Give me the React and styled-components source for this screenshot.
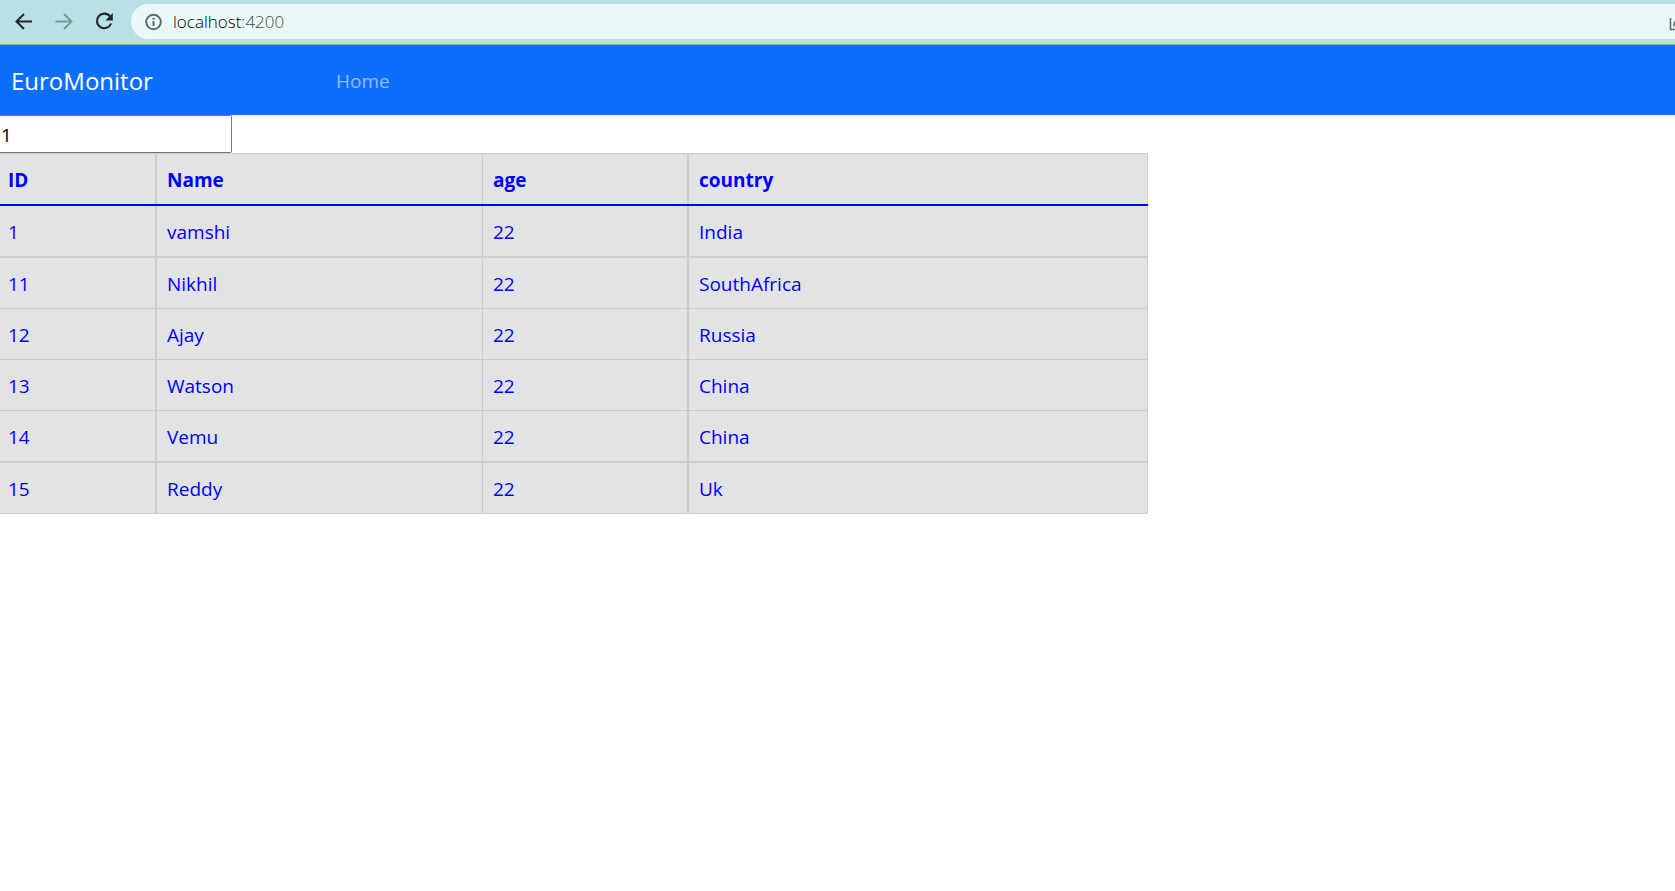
import React, { useState } from "react";
import styled, { createGlobalStyle } from "styled-components";

const GlobalStyle = createGlobalStyle`
  *, *::before, *::after { box-sizing: border-box; }
  body {
    margin: 0;
    background: #fff;
    color: #212529;
    font-family: "Segoe UI", "Open Sans", "Noto Sans", sans-serif;
    font-size: 19px;
    font-weight: 400;
    line-height: 30px;
  }
`;

const Page = styled.div`
  overflow-x: hidden;
`;

const BrowserBar = styled.header`
  display: flex;
  align-items: center;
  height: 45px;
  padding: 0 0 1px 12px;
  background: #b7e1e4;
  border-bottom: 1px solid #8fa9ad;
`;

const ToolButton = styled.button`
  display: flex;
  flex: none;
  width: 24px;
  height: 24px;
  margin-right: 16px;
  padding: 0;
  border: 0;
  background: none;
  color: ${(p) => (p.$muted ? "#7d999c" : "#202628")};
`;

const AddressBar = styled.div`
  display: flex;
  flex: 1;
  align-items: center;
  min-width: 0;
  height: 35px;
  padding-left: 12px;
  margin-left: -1px;
  overflow: hidden;
  background: #ebf8f8;
  border-radius: 18px 0 0 18px;
`;

const Address = styled.span`
  flex: 1;
  padding-left: 10px;
  color: #000;
  font-size: 17px;
  font-weight: 300;
  line-height: 24px;
`;

const Port = styled.span`
  color: #3f4a4c;
`;

const ShareButton = styled.button`
  display: flex;
  flex: none;
  width: 6px;
  padding: 0;
  border: 0;
  background: none;
  overflow: hidden;
  svg { flex: none; }
`;

const Navbar = styled.nav`
  display: flex;
  align-items: center;
  height: 70px;
  padding: 2px 0 0 11px;
  background: #0d6efd;
`;

const Brand = styled.a`
  width: 325px;
  color: #fff;
  font-size: 24px;
  text-decoration: none;
`;

const NavLink = styled.a`
  color: rgba(255, 255, 255, 0.55);
  text-decoration: none;
`;

const SearchInput = styled.input`
  display: block;
  width: 232px;
  height: 38px;
  padding: 3px 1px 1px;
  border: 1px solid #767676;
  border-left: 0;
  border-radius: 0 2px 2px 0;
  background: #fff;
  color: #000;
  font: inherit;
  outline: 0;
`;

const Table = styled.table`
  width: 100%;
  max-width: 1148px;
  table-layout: fixed;
  border-collapse: separate;
  border-spacing: 0;
  background: #e1e3e5;
  color: #00f;
  border-top: 1px solid #cbccce;
`;

const Column = styled.col`
  width: ${(p) => p.$width};
`;

const edge = (p) => (p.$thick ? "2px" : "1px");

/* The rule under the heading is a shadow, so that it runs unbroken across the column edges. */
const HeadCell = styled.th`
  position: relative;
  padding: 11px 10px 9px;
  border-right: ${edge} solid #cbccce;
  box-shadow: 0 2px 0 #00f;
  font-weight: 700;
  text-align: left;
  &:first-child { padding-left: 8px; }
`;

const Row = styled.tr`
  --rule: ${edge};
`;

const Cell = styled.td`
  padding: 11px 10px 9px;
  border-right: ${edge} solid #cbccce;
  border-bottom: var(--rule) solid #cbccce;
  &:first-child { padding-left: 8px; }
  ${Row}:first-child & { padding-top: 13px; }
`;

const columns = [
  { key: "id", label: "ID", width: "157px", thick: true },
  { key: "name", label: "Name", width: "326px" },
  { key: "age", label: "age", width: "206px", thick: true },
  { key: "country", label: "country", width: "auto" },
];

const people = [
  { id: 1, name: "vamshi", age: 22, country: "India", thick: true },
  { id: 11, name: "Nikhil", age: 22, country: "SouthAfrica" },
  { id: 12, name: "Ajay", age: 22, country: "Russia" },
  { id: 13, name: "Watson", age: 22, country: "China" },
  { id: 14, name: "Vemu", age: 22, country: "China", thick: true },
  { id: 15, name: "Reddy", age: 22, country: "Uk" },
];

const ArrowIcon = ({ flip }) => (
  <svg width="24" height="24" viewBox="0 0 24 24" fill="none" stroke="currentColor" strokeWidth="2">
    <path d={flip ? "M3.5 11.5H19M12 4L19.5 11.5L12 19" : "M20 11.5H5M12 4L4.5 11.5L12 19"} />
  </svg>
);

const ReloadIcon = () => (
  <svg width="24" height="24" viewBox="0 0 24 24">
    <path d="M18.2 6.7A7.3 7.3 0 1 0 19.1 13.5" fill="none" stroke="currentColor" strokeWidth="2.1" />
    <path d="M20.8 3.1V10.5H13.4Z" fill="currentColor" />
  </svg>
);

const InfoIcon = () => (
  <svg width="20" height="20" viewBox="0 0 20 20" fill="none" stroke="#5f6b6d" strokeWidth="2">
    <circle cx="10.5" cy="10" r="7.3" />
    <path d="M10.5 9V14M10.5 5.8V7.8" />
  </svg>
);

const ShareIcon = () => (
  <svg width="20" height="20" viewBox="0 0 20 20" fill="none" stroke="#5f6b6d" strokeWidth="1.6">
    <path d="M1.5 6V17.5H16V13" />
    <path d="M5 13C5 9 8 7.5 12 7.5V4L17 9L12 13V10.5C9 10.5 6.5 11 5 13Z" />
  </svg>
);

export default function App() {
  const [query, setQuery] = useState("1");
  return (
    <Page>
      <GlobalStyle />
      <BrowserBar>
        <ToolButton aria-label="Back"><ArrowIcon /></ToolButton>
        <ToolButton aria-label="Forward" $muted><ArrowIcon flip /></ToolButton>
        <ToolButton aria-label="Reload"><ReloadIcon /></ToolButton>
        <AddressBar>
          <InfoIcon />
          <Address>localhost<Port>:4200</Port></Address>
          <ShareButton aria-label="Share"><ShareIcon /></ShareButton>
        </AddressBar>
      </BrowserBar>
      <Navbar>
        <Brand href="#">EuroMonitor</Brand>
        <NavLink href="#">Home</NavLink>
      </Navbar>
      <main>
        <SearchInput
          aria-label="Search by ID"
          value={query}
          onChange={(e) => setQuery(e.target.value)}
        />
        <Table>
          <colgroup>
            {columns.map((c) => <Column key={c.key} $width={c.width} />)}
          </colgroup>
          <thead>
            <tr>
              {columns.map((c) => (
                <HeadCell key={c.key} scope="col" $thick={c.thick}>{c.label}</HeadCell>
              ))}
            </tr>
          </thead>
          <tbody>
            {people.map((person) => (
              <Row key={person.id} $thick={person.thick}>
                {columns.map((c) => (
                  <Cell key={c.key} $thick={c.thick}>{person[c.key]}</Cell>
                ))}
              </Row>
            ))}
          </tbody>
        </Table>
      </main>
    </Page>
  );
}
